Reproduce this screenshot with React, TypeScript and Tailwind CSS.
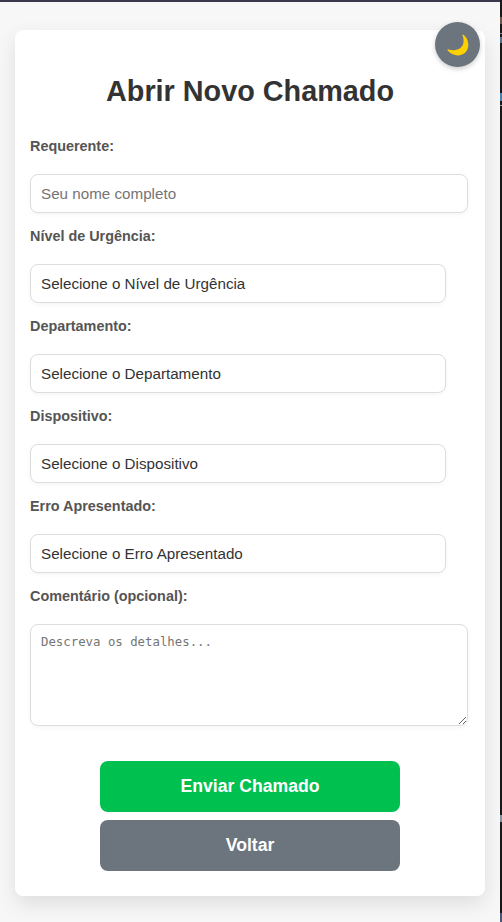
import React from "react";

const fieldBox =
  "block h-[39px] rounded-[8px] border border-[#ddd] bg-white px-[10px] text-[15.2px] leading-[37px] shadow-[0_2px_4px_rgba(0,0,0,0.04)] outline-none";

function Label({ text }: { text: string }) {
  return (
    <span className="flex h-[37px] items-start text-[14.4px] leading-[18px] font-bold text-[#555]">
      {text}
    </span>
  );
}

function SelectField({ label, value }: { label: string; value: string }) {
  return (
    <label className="mb-[14px] block">
      <Label text={label} />
      <select
        className={`${fieldBox} w-[416px] appearance-none text-[#333]`}
        defaultValue=""
      >
        <option value="">{value}</option>
      </select>
    </label>
  );
}

export default function App() {
  return (
    <div className="flex h-[922px] w-[502px] overflow-hidden bg-[#181818] font-['Liberation_Sans',Arial,sans-serif]">
      <div className="relative h-full w-[500px] overflow-hidden border-t-2 border-[#3b364c] bg-[#f7f7f7] pt-[28px]">
        <main className="mx-[15px] h-[866px] rounded-[8px] bg-white px-[15px] pt-[41px] shadow-[0_8px_20px_rgba(0,0,0,0.1)]">
          <h1 className="text-center text-[28.8px] leading-[40px] font-bold text-[#333]">
            Abrir Novo Chamado
          </h1>
          <form className="pt-[26px]">
            <label className="mb-[14px] block">
              <Label text="Requerente:" />
              <input
                className={`${fieldBox} w-[438px] placeholder:text-[#757575] placeholder:opacity-100`}
                placeholder="Seu nome completo"
              />
            </label>
            <SelectField label="Nível de Urgência:" value="Selecione o Nível de Urgência" />
            <SelectField label="Departamento:" value="Selecione o Departamento" />
            <SelectField label="Dispositivo:" value="Selecione o Dispositivo" />
            <SelectField label="Erro Apresentado:" value="Selecione o Erro Apresentado" />
            <label className="block">
              <Label text="Comentário (opcional):" />
              <textarea
                className="block h-[102px] w-[438px] resize rounded-[8px] border border-[#ddd] bg-white p-[10px] font-['DejaVu_Sans_Mono',monospace] text-[12.35px] leading-[15px] shadow-[0_2px_4px_rgba(0,0,0,0.04)] placeholder:text-[#757575] placeholder:opacity-100"
                placeholder="Descreva os detalhes..."
              />
            </label>
            <div className="mt-[35px] flex flex-col items-center gap-[8px] text-[17.6px] font-bold text-white">
              <button type="button" className="h-[51px] w-[300px] rounded-[8px] bg-[#00c150]">
                Enviar Chamado
              </button>
              <button type="button" className="h-[51px] w-[300px] rounded-[8px] bg-[#6c747d]">
                Voltar
              </button>
            </div>
          </form>
        </main>
        <button
          type="button"
          className="absolute top-[20px] right-[20px] flex size-[45px] items-center justify-center rounded-full bg-[#6c747d] shadow-[0_2px_5px_rgba(0,0,0,0.2)]"
        >
          <svg width="22" height="22" viewBox="0 0 22 22">
            <path
              d="M15.9 .6C18.9 2.4 21.3 6.2 21.3 11C21.3 17 16.8 21.4 11 21.4C6 21.4 1.8 18.6 .4 15.8C.2 15.2 .5 15 1 15.2C5.1 17 10.3 16.9 13.9 13.6C17.2 10.4 17.2 5.3 15.4 1.2C15.2 .6 15.5 .4 15.9 .6Z"
              fill="#fdd000"
            />
          </svg>
        </button>
      </div>
      <div className="w-[2px]">
        <div className="mt-[17px] h-[7px] bg-[#6b5548]" />
        <div className="mt-[9px] h-[1px] bg-[#7a8a99]" />
        <div className="mt-[3px] h-[6px] bg-[#4f6f8c]" />
        <div className="mt-[50px] h-[8px] bg-[#3f83b5]" />
        <div className="mt-[4px] h-[1px] bg-[#999]" />
        <div className="mt-[709px] h-[7px] bg-[#8290a0]" />
        <div className="mt-[91px] h-[9px] bg-[#4a5678]" />
      </div>
    </div>
  );
}
